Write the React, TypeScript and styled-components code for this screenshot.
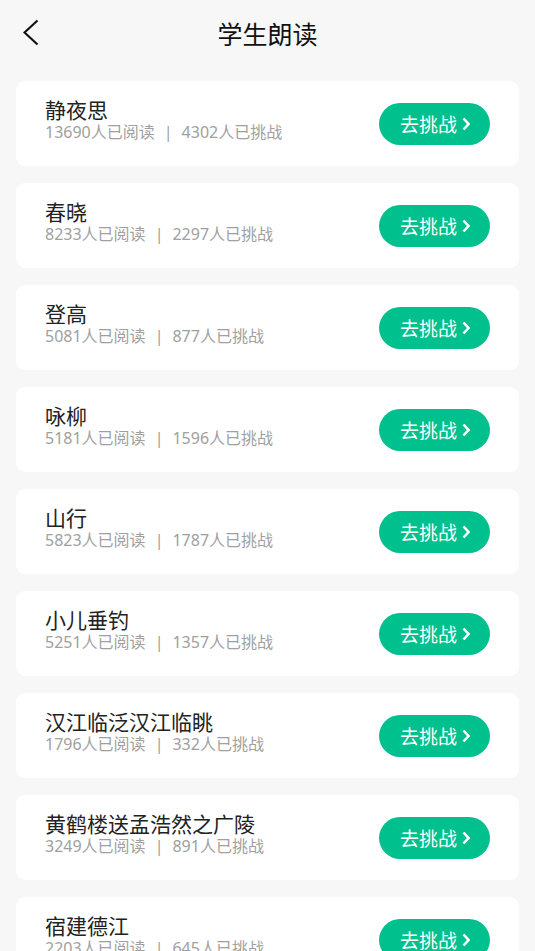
import styled, { createGlobalStyle } from "styled-components";

type Poem = {
	title: string;
	reads: number;
	challenges: number;
};

const poems: Poem[] = [
	{ title: "静夜思", reads: 13690, challenges: 4302 },
	{ title: "春晓", reads: 8233, challenges: 2297 },
	{ title: "登高", reads: 5081, challenges: 877 },
	{ title: "咏柳", reads: 5181, challenges: 1596 },
	{ title: "山行", reads: 5823, challenges: 1787 },
	{ title: "小儿垂钓", reads: 5251, challenges: 1357 },
	{ title: "汉江临泛汉江临眺", reads: 1796, challenges: 332 },
	{ title: "黄鹤楼送孟浩然之广陵", reads: 3249, challenges: 891 },
	{ title: "宿建德江", reads: 2203, challenges: 645 },
];

const App = () => {
	return (
		<>
			<GlobalStyle />
			<Page>
				<Header>
					<BackButton aria-label="返回">
						<svg width="16" height="28" viewBox="0 0 16 28">
							<polyline
								points="14.5,1.5 1.5,13.5 14.5,25.5"
								fill="none"
								stroke="#111"
								strokeWidth="2.2"
							/>
						</svg>
					</BackButton>
					<Title>学生朗读</Title>
				</Header>

				<List>
					{poems.map((poem) => (
						<Card key={poem.title}>
							<Info>
								<PoemTitle>{poem.title}</PoemTitle>
								<Stats>
									{poem.reads}人已阅读
									<Divider>|</Divider>
									{poem.challenges}人已挑战
								</Stats>
							</Info>
							<ChallengeButton>
								去挑战
								<svg width="10" height="14" viewBox="0 0 10 14">
									<polyline
										points="2.5,1.5 7.5,7 2.5,12.5"
										fill="none"
										stroke="#fff"
										strokeWidth="2.6"
									/>
								</svg>
							</ChallengeButton>
						</Card>
					))}
				</List>
			</Page>
		</>
	);
};

export default App;

const GlobalStyle = createGlobalStyle`
	html, body {
		margin: 0;
		padding: 0;
		background: #f7f7f7;
		overflow: hidden;
	}

	body {
		font-family: "Noto Sans", "Noto Sans CJK SC", sans-serif;
	}
`;

const Page = styled.div`
	width: 535px;
	min-height: 951px;
	background: #f7f7f7;
`;

const Header = styled.header`
	position: relative;
	height: 66px;
	display: flex;
	align-items: center;
	justify-content: center;
`;

const BackButton = styled.button`
	position: absolute;
	left: 23px;
	top: 19px;
	padding: 0;
	border: 0;
	background: none;
	display: flex;
	cursor: pointer;
`;

const Title = styled.h1`
	margin: 0;
	font-size: 25px;
	font-weight: 400;
	color: #111;
	font-family: "Noto Sans CJK SC", sans-serif;
`;

const List = styled.div`
	display: flex;
	flex-direction: column;
	gap: 17px;
	padding: 15px 16px;
`;

const Card = styled.div`
	height: 85px;
	box-sizing: border-box;
	background: #fff;
	border-radius: 9px;
	display: flex;
	align-items: center;
	justify-content: space-between;
	padding: 0 29px;
`;

const Info = styled.div`
	display: flex;
	flex-direction: column;
	margin-bottom: 9px;
`;

const PoemTitle = styled.div`
	font-size: 21px;
	line-height: 26px;
	color: #222;
	font-family: "Noto Sans CJK SC", sans-serif;
`;

const Stats = styled.div`
	font-size: 16px;
	line-height: 20px;
	color: #a0a0a0;
`;

const Divider = styled.span`
	margin: 0 9px;
`;

const ChallengeButton = styled.button`
	width: 111px;
	height: 42px;
	border: 0;
	border-radius: 21px;
	background: #00c08d;
	color: #fff;
	font-family: "Noto Sans CJK SC", sans-serif;
	font-size: 19px;
	display: flex;
	align-items: center;
	justify-content: center;
	gap: 4px;
	padding: 0 0 0 2px;
	cursor: pointer;
`;
